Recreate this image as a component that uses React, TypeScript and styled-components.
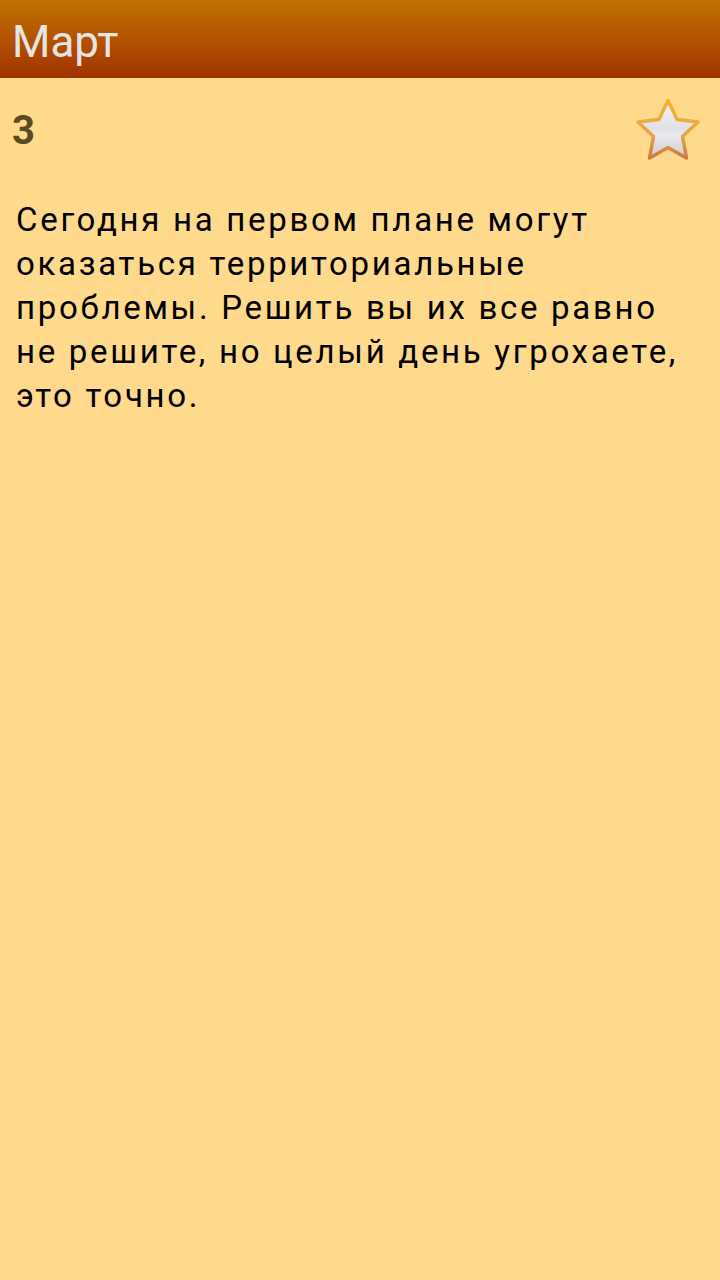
import React from 'react';
import styled, { createGlobalStyle } from 'styled-components';

const GlobalStyle = createGlobalStyle`
  html, body {
    margin: 0;
    padding: 0;
    background-color: #ffd98c;
  }
  body {
    font-family: Roboto, 'Liberation Sans', sans-serif;
  }
`;

const Screen = styled.div`
  min-height: 1280px;
  background-color: #ffd98c;
  display: flex;
  flex-direction: column;
`;

const TopBar = styled.header`
  height: 78px;
  display: flex;
  align-items: center;
  padding: 6px 12px 0;
  box-sizing: border-box;
  background: linear-gradient(to bottom, #c07200 0%, #b25000 55%, #a03200 100%);
`;

const BarTitle = styled.h1`
  margin: 0;
  font-size: 44px;
  font-weight: 400;
  color: #e4e4e4;
`;

const DayRow = styled.div`
  display: flex;
  align-items: center;
  justify-content: space-between;
  height: 66px;
  margin-top: 19px;
  padding: 0 18px 0 12px;
`;

const DayNumber = styled.div`
  font-size: 40px;
  font-weight: 700;
  line-height: 64px;
  padding-top: 2px;
  color: #5c4a22;
`;

const FavButton = styled.button`
  border: none;
  background: none;
  padding: 0;
  width: 68px;
  height: 66px;
  cursor: pointer;
`;

const Forecast = styled.p`
  margin: 35px 0 0;
  padding: 0 16px;
  font-size: 33px;
  line-height: 44px;
  letter-spacing: 2.7px;
  color: #000;
`;

const Star: React.FC = () => (
  <svg width="68" height="66" viewBox="0 0 68 66">
    <defs>
      <linearGradient id="starFill" x1="0" y1="0" x2="0" y2="1">
        <stop offset="0" stopColor="#f6f6f8" />
        <stop offset="0.5" stopColor="#dfe0e3" />
        <stop offset="0.58" stopColor="#e9eaec" />
        <stop offset="1" stopColor="#cdd0d4" />
      </linearGradient>
      <linearGradient id="starEdge" x1="0" y1="0" x2="0" y2="1">
        <stop offset="0" stopColor="#f4b232" />
        <stop offset="0.6" stopColor="#eaa448" />
        <stop offset="1" stopColor="#cc7a40" />
      </linearGradient>
    </defs>
    <path
      d="M34 3.5 L43 22.5 L64 25 L48.5 39.5 L52.5 61 L34 50.5 L15.5 61 L19.5 39.5 L4 25 L25 22.5 Z"
      fill="url(#starFill)"
      stroke="url(#starEdge)"
      strokeWidth="3.5"
      strokeLinejoin="round"
    />
  </svg>
);

export default function App() {
  return (
    <Screen>
      <GlobalStyle />
      <TopBar>
        <BarTitle>Март</BarTitle>
      </TopBar>
      <DayRow>
        <DayNumber>3</DayNumber>
        <FavButton aria-label="В избранное">
          <Star />
        </FavButton>
      </DayRow>
      <Forecast>
        Сегодня на первом плане могут оказаться территориальные проблемы. Решить вы их все равно не решите, но целый день угрохаете, это точно.
      </Forecast>
    </Screen>
  );
}
